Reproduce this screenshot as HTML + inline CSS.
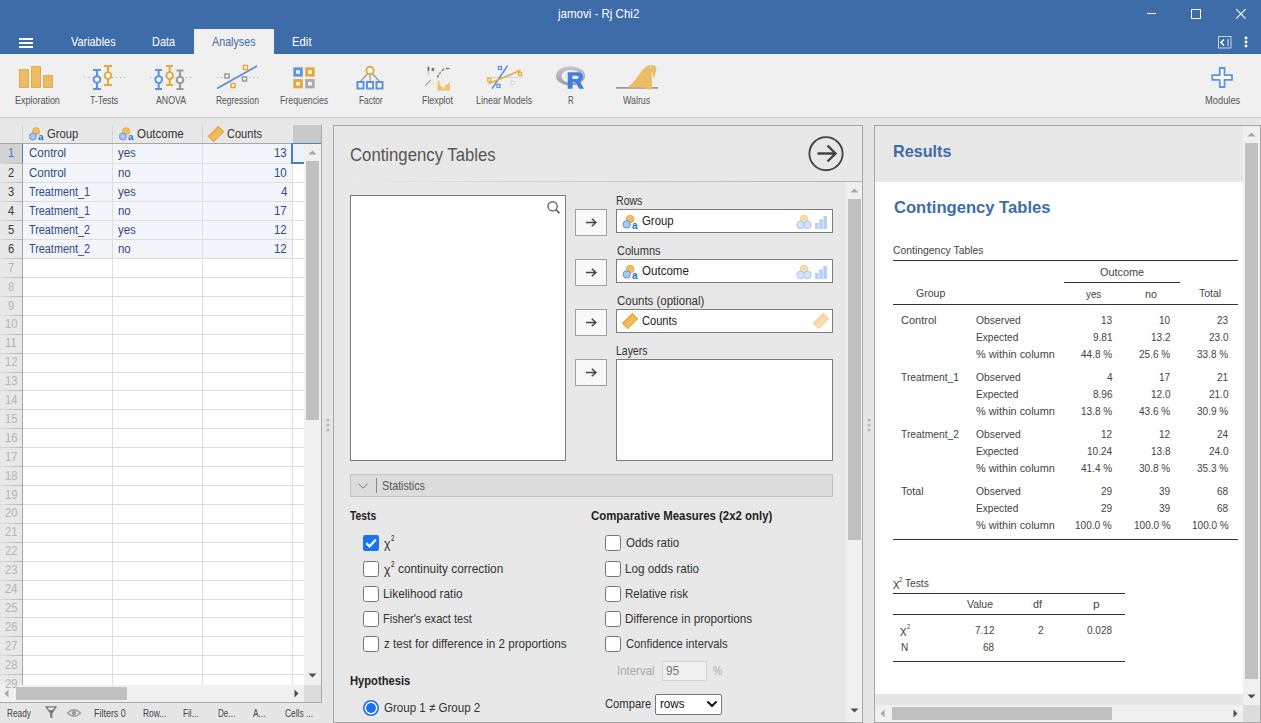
<!DOCTYPE html>
<html><head><meta charset="utf-8">
<style>
*{box-sizing:border-box;margin:0;padding:0}
html,body{width:1261px;height:723px;overflow:hidden;background:#e6e6e6;font-family:"Liberation Sans",sans-serif;position:relative}
.a{position:absolute}
.t{position:absolute;white-space:nowrap;transform-origin:0 0}
svg{position:absolute;overflow:visible}
</style></head><body>
<div class="a" style="left:0px;top:0px;width:1261px;height:54px;background:#3e6ca8"></div>
<div class="a" style="left:1147px;top:13px;width:9px;height:1px;background:#fff"></div>
<div class="a" style="left:1191px;top:9px;width:9.5px;height:9.5px;border:1px solid #fff"></div>
<svg style="left:1235px;top:8px" width="12" height="12" viewBox="0 0 12 12"><path d="M1.2 1.2L10.6 10.6M10.6 1.2L1.2 10.6" stroke="#fff" stroke-width="1.1" fill="none"/></svg>
<div class="a" style="left:19px;top:38px;width:14px;height:2px;background:#fff"></div>
<div class="a" style="left:19px;top:42px;width:14px;height:2px;background:#fff"></div>
<div class="a" style="left:19px;top:46px;width:14px;height:2px;background:#fff"></div>
<div class="a" style="left:194px;top:29px;width:80px;height:25px;background:#f0f0f0"></div>
<svg style="left:1218px;top:36px" width="14" height="13" viewBox="0 0 14 13"><rect x="0.5" y="0.5" width="12.5" height="11.5" fill="none" stroke="#c8d4e6" stroke-width="1"/><path d="M6 3.5L3 6.5L6 9.5" stroke="#fff" stroke-width="1.5" fill="none"/><rect x="9" y="3" width="2" height="7" fill="#8fa8cc"/></svg>
<svg style="left:1244px;top:35.6px" width="4" height="4"><circle cx="2" cy="2" r="1.45" fill="#fff"/></svg>
<svg style="left:1244px;top:40px" width="4" height="4"><circle cx="2" cy="2" r="1.45" fill="#fff"/></svg>
<svg style="left:1244px;top:44px" width="4" height="4"><circle cx="2" cy="2" r="1.45" fill="#fff"/></svg>
<div class="a" style="left:0px;top:54px;width:1261px;height:63px;background:#f0f0f0"></div>
<div class="a" style="left:0px;top:117px;width:1261px;height:1px;background:#cdcdcd"></div>
<svg style="left:18px;top:65px" width="37" height="25" viewBox="0 0 37 25"><rect x="1.5" y="4.5" width="9" height="18" fill="#ebbb66" stroke="#e3ad4f"/><rect x="13.5" y="1.5" width="9" height="21" fill="#ebbb66" stroke="#e3ad4f"/><rect x="25.5" y="10.5" width="9" height="12" fill="#ebbb66" stroke="#e3ad4f"/></svg>
<svg style="left:80.6px;top:63px" width="48" height="30" viewBox="0 0 48 30"><line x1="3" y1="14.5" x2="45" y2="14.5" stroke="#a8b8cc" stroke-width="1" stroke-dasharray="1.2,2.8"/><path d="M12 7H20M16 7V26M12 26H20" stroke="#5a93e8" stroke-width="2" fill="none"/><circle cx="16" cy="16.5" r="3.3" fill="#fff" stroke="#5a93e8" stroke-width="2"/><path d="M23 3H31M27 3V22M23 22H31" stroke="#e8a838" stroke-width="2" fill="none"/><circle cx="27" cy="12.5" r="3.3" fill="#fff" stroke="#e8a838" stroke-width="2"/></svg>
<svg style="left:148px;top:63px" width="46" height="30" viewBox="0 0 46 30"><line x1="2" y1="14.5" x2="44" y2="14.5" stroke="#a8b8cc" stroke-width="1" stroke-dasharray="1.2,2.8"/><path d="M7 7H14M10.7 7V26M7 26H14" stroke="#5a93e8" stroke-width="2" fill="none"/><circle cx="10.7" cy="16.6" r="3.3" fill="#fff" stroke="#5a93e8" stroke-width="2"/><path d="M18 3H25M21.7 3V22M18 22H25" stroke="#e8a838" stroke-width="2" fill="none"/><circle cx="21.7" cy="12.6" r="3.3" fill="#fff" stroke="#e8a838" stroke-width="2"/><path d="M28.5 7.5H35.5M32 7.5V26M28.5 26H35.5" stroke="#999" stroke-width="2" fill="none"/><circle cx="32" cy="17" r="3.3" fill="#fff" stroke="#999" stroke-width="2"/></svg>
<svg style="left:214px;top:63px" width="48" height="30" viewBox="0 0 48 30"><line x1="3" y1="14.5" x2="45" y2="14.5" stroke="#a8b8cc" stroke-width="1" stroke-dasharray="1.2,2.8"/><line x1="3" y1="25.5" x2="43" y2="3" stroke="#4a8ae6" stroke-width="1.6"/><rect x="11" y="11" width="4" height="4" fill="#fff" stroke="#999" stroke-width="1.5"/><rect x="29.5" y="2.5" width="4" height="4" fill="#fff" stroke="#e8a838" stroke-width="1.5"/><rect x="28.5" y="14" width="4" height="4" fill="#fff" stroke="#999" stroke-width="1.5"/><rect x="17" y="20.5" width="4" height="4" fill="#fff" stroke="#e8a838" stroke-width="1.5"/></svg>
<svg style="left:292px;top:66px" width="25" height="24" viewBox="0 0 25 24"><rect x="2.8" y="2.8" width="6.5" height="6.4" fill="#fff" stroke="#5a93e8" stroke-width="2.9"/><rect x="14.7" y="2.8" width="6.5" height="6.4" fill="#fff" stroke="#e8a838" stroke-width="2.9"/><rect x="2.8" y="14.5" width="6.5" height="6.4" fill="#fff" stroke="#e8a838" stroke-width="2.9"/><rect x="14.7" y="14.5" width="6.5" height="6.4" fill="#fff" stroke="#aaa" stroke-width="2.9"/></svg>
<svg style="left:354px;top:65px" width="33" height="26" viewBox="0 0 33 26"><path d="M16 6L6 17M16 6V17M16 6L26 17" stroke="#999" stroke-width="1.2" fill="none"/><circle cx="16" cy="5.4" r="3.6" fill="#fff" stroke="#e8a838" stroke-width="2"/><rect x="3.5" y="17" width="6" height="6.5" fill="#fff" stroke="#5a93e8" stroke-width="2"/><rect x="13" y="17" width="6" height="6.5" fill="#fff" stroke="#5a93e8" stroke-width="2"/><rect x="22.5" y="17" width="6" height="6.5" fill="#fff" stroke="#5a93e8" stroke-width="2"/></svg>
<svg style="left:420px;top:60px" width="36" height="34" viewBox="0 0 36 34"><path d="M8.4 5.2V15" stroke="#f5c878" stroke-width="1.4"/><rect x="7.6" y="7" width="1.6" height="4" fill="#3a6eb0"/><circle cx="12.9" cy="9.6" r="2" fill="#f5c878"/><rect x="11.9" y="8" width="2" height="3" fill="#3a6eb0" opacity="0.85"/><path d="M17.5 17.5Q19 12 23 9.6Q26 8.5 29.5 8.5" stroke="#f5d090" stroke-width="1.6" fill="none"/><path d="M17.5 17.5L18.5 15M19.5 14L20.5 12.5M22 10.5L24 9.3M26 8.5H29.5" stroke="#3a6eb0" stroke-width="1.1" fill="none"/><path d="M5.5 25.5L10.7 19.8" stroke="#999" stroke-width="1.1"/><path d="M12 21.5L14 22.5M11.5 23.5L15 24.5" stroke="#f5d8a8" stroke-width="0.9"/><path d="M17.5 30V21H19.5V25H21V27H22.5V29H23.5V30Z" fill="#f6bf55"/><path d="M23.5 30V27H25V25H26.5V24H28V23H30V30Z" fill="#f6c46a"/><path d="M17 30.5H30" stroke="#bbb" stroke-width="0.5"/></svg>
<svg style="left:485px;top:63px" width="40" height="30" viewBox="0 0 40 30"><line x1="1" y1="14.5" x2="37" y2="14.5" stroke="#d4d4d4" stroke-width="1"/><line x1="7.1" y1="25.7" x2="22.6" y2="2.6" stroke="#4a8ae6" stroke-width="1.5"/><line x1="3.6" y1="20.8" x2="35.6" y2="7.3" stroke="#e8a838" stroke-width="1.5"/><rect x="13.4" y="3.5" width="3" height="3" fill="#fff" stroke="#5a93e8" stroke-width="1.3"/><rect x="33.6" y="9.4" width="3" height="3" fill="#fff" stroke="#e8a838" stroke-width="1.3"/><rect x="2.8" y="15.5" width="3" height="3" fill="#fff" stroke="#e8a838" stroke-width="1.3"/><rect x="26.1" y="18.3" width="3" height="3" fill="#fff" stroke="#d8d8d8" stroke-width="1.3"/><rect x="12" y="21.4" width="3" height="3" fill="#fff" stroke="#5a93e8" stroke-width="1.3"/></svg>
<svg style="left:554px;top:65px" width="32" height="26" viewBox="0 0 32 26"><defs><linearGradient id="rg" x1="0" y1="0" x2="0" y2="1"><stop offset="0" stop-color="#c8c8cc"/><stop offset="1" stop-color="#9a9aa0"/></linearGradient></defs><ellipse cx="16.5" cy="10.9" rx="14.5" ry="9.6" fill="url(#rg)"/><ellipse cx="17" cy="11.4" rx="9.5" ry="6.4" fill="#f0f0f0"/><path d="M13.7 7.2H24Q28.8 7.2 28.8 11.8Q28.8 15.2 25.8 16.3L30 23.8H25.2L21.5 17.2H18.5V23.8H13.7Z M18.5 10.8V13.9H23Q24.6 13.9 24.6 12.3Q24.6 10.8 23 10.8Z" fill="#3f7fe0" fill-rule="evenodd"/></svg>
<svg style="left:615px;top:64px" width="45" height="27" viewBox="0 0 45 27"><line x1="1" y1="23.8" x2="43" y2="23.8" stroke="#999" stroke-width="1.8"/><path d="M12 23.6Q18 19.5 23 12Q27 5.5 31 2.5Q33 1 37 1.2Q40.5 1.5 41.3 4Q41.8 6 40.6 8L39.4 13.6Q38.8 15 38.3 13.8L37.6 8.3Q37 7.6 36.6 8.6L37.2 23.2Q37 25.4 33.5 25.6Q31 25.6 30.3 23.8Z" fill="#ebbb66"/><circle cx="35.6" cy="3.6" r="0.7" fill="#fff"/></svg>
<svg style="left:1211px;top:67px" width="23" height="22" viewBox="0 0 23 22"><path d="M8.8 1H13.5V8.1H21V12.9H13.5V20H8.8V12.9H1.3V8.1H8.8Z" fill="#fff" stroke="#5a93e8" stroke-width="1.8"/></svg>
<div class="a" style="left:0px;top:125px;width:321px;height:18px;background:#e8e8e8"></div>
<div class="a" style="left:293px;top:125px;width:29px;height:18px;background:#cacaca"></div>
<div class="a" style="left:22px;top:125px;width:1px;height:18px;background:#d4d4d4"></div>
<div class="a" style="left:112px;top:125px;width:1px;height:18px;background:#d4d4d4"></div>
<div class="a" style="left:202px;top:125px;width:1px;height:18px;background:#d4d4d4"></div>
<div class="a" style="left:0px;top:143px;width:304px;height:1px;background:#a8a8a8"></div>
<div class="a" style="left:0px;top:144px;width:304px;height:541px;background:#ffffff"></div>
<div class="a" style="left:0px;top:144px;width:22px;height:541px;background:#e8e8e8"></div>
<div class="a" style="left:23px;top:144px;width:269px;height:114px;background:#f2f5f9"></div>
<div class="a" style="left:0px;top:144px;width:22px;height:19px;background:#d2d2d2"></div>
<div class="a" style="left:23px;top:163px;width:281px;height:1px;background:#dedede"></div>
<div class="a" style="left:0px;top:163px;width:22px;height:1px;background:linear-gradient(90deg,#dcdcdc,#b4b4b4)"></div>
<div class="a" style="left:23px;top:182px;width:281px;height:1px;background:#dedede"></div>
<div class="a" style="left:0px;top:182px;width:22px;height:1px;background:linear-gradient(90deg,#dcdcdc,#b4b4b4)"></div>
<div class="a" style="left:23px;top:201px;width:281px;height:1px;background:#dedede"></div>
<div class="a" style="left:0px;top:201px;width:22px;height:1px;background:linear-gradient(90deg,#dcdcdc,#b4b4b4)"></div>
<div class="a" style="left:23px;top:220px;width:281px;height:1px;background:#dedede"></div>
<div class="a" style="left:0px;top:220px;width:22px;height:1px;background:linear-gradient(90deg,#dcdcdc,#b4b4b4)"></div>
<div class="a" style="left:23px;top:239px;width:281px;height:1px;background:#dedede"></div>
<div class="a" style="left:0px;top:239px;width:22px;height:1px;background:linear-gradient(90deg,#dcdcdc,#b4b4b4)"></div>
<div class="a" style="left:23px;top:258px;width:281px;height:1px;background:#dedede"></div>
<div class="a" style="left:0px;top:258px;width:22px;height:1px;background:linear-gradient(90deg,#dcdcdc,#b4b4b4)"></div>
<div class="a" style="left:23px;top:277px;width:281px;height:1px;background:#dedede"></div>
<div class="a" style="left:0px;top:277px;width:22px;height:1px;background:linear-gradient(90deg,#dcdcdc,#b4b4b4)"></div>
<div class="a" style="left:23px;top:296px;width:281px;height:1px;background:#dedede"></div>
<div class="a" style="left:0px;top:296px;width:22px;height:1px;background:linear-gradient(90deg,#dcdcdc,#b4b4b4)"></div>
<div class="a" style="left:23px;top:315px;width:281px;height:1px;background:#dedede"></div>
<div class="a" style="left:0px;top:315px;width:22px;height:1px;background:linear-gradient(90deg,#dcdcdc,#b4b4b4)"></div>
<div class="a" style="left:23px;top:334px;width:281px;height:1px;background:#dedede"></div>
<div class="a" style="left:0px;top:334px;width:22px;height:1px;background:linear-gradient(90deg,#dcdcdc,#b4b4b4)"></div>
<div class="a" style="left:23px;top:353px;width:281px;height:1px;background:#dedede"></div>
<div class="a" style="left:0px;top:353px;width:22px;height:1px;background:linear-gradient(90deg,#dcdcdc,#b4b4b4)"></div>
<div class="a" style="left:23px;top:372px;width:281px;height:1px;background:#dedede"></div>
<div class="a" style="left:0px;top:372px;width:22px;height:1px;background:linear-gradient(90deg,#dcdcdc,#b4b4b4)"></div>
<div class="a" style="left:23px;top:390px;width:281px;height:1px;background:#dedede"></div>
<div class="a" style="left:0px;top:390px;width:22px;height:1px;background:linear-gradient(90deg,#dcdcdc,#b4b4b4)"></div>
<div class="a" style="left:23px;top:409px;width:281px;height:1px;background:#dedede"></div>
<div class="a" style="left:0px;top:409px;width:22px;height:1px;background:linear-gradient(90deg,#dcdcdc,#b4b4b4)"></div>
<div class="a" style="left:23px;top:428px;width:281px;height:1px;background:#dedede"></div>
<div class="a" style="left:0px;top:428px;width:22px;height:1px;background:linear-gradient(90deg,#dcdcdc,#b4b4b4)"></div>
<div class="a" style="left:23px;top:447px;width:281px;height:1px;background:#dedede"></div>
<div class="a" style="left:0px;top:447px;width:22px;height:1px;background:linear-gradient(90deg,#dcdcdc,#b4b4b4)"></div>
<div class="a" style="left:23px;top:466px;width:281px;height:1px;background:#dedede"></div>
<div class="a" style="left:0px;top:466px;width:22px;height:1px;background:linear-gradient(90deg,#dcdcdc,#b4b4b4)"></div>
<div class="a" style="left:23px;top:485px;width:281px;height:1px;background:#dedede"></div>
<div class="a" style="left:0px;top:485px;width:22px;height:1px;background:linear-gradient(90deg,#dcdcdc,#b4b4b4)"></div>
<div class="a" style="left:23px;top:504px;width:281px;height:1px;background:#dedede"></div>
<div class="a" style="left:0px;top:504px;width:22px;height:1px;background:linear-gradient(90deg,#dcdcdc,#b4b4b4)"></div>
<div class="a" style="left:23px;top:523px;width:281px;height:1px;background:#dedede"></div>
<div class="a" style="left:0px;top:523px;width:22px;height:1px;background:linear-gradient(90deg,#dcdcdc,#b4b4b4)"></div>
<div class="a" style="left:23px;top:542px;width:281px;height:1px;background:#dedede"></div>
<div class="a" style="left:0px;top:542px;width:22px;height:1px;background:linear-gradient(90deg,#dcdcdc,#b4b4b4)"></div>
<div class="a" style="left:23px;top:561px;width:281px;height:1px;background:#dedede"></div>
<div class="a" style="left:0px;top:561px;width:22px;height:1px;background:linear-gradient(90deg,#dcdcdc,#b4b4b4)"></div>
<div class="a" style="left:23px;top:580px;width:281px;height:1px;background:#dedede"></div>
<div class="a" style="left:0px;top:580px;width:22px;height:1px;background:linear-gradient(90deg,#dcdcdc,#b4b4b4)"></div>
<div class="a" style="left:23px;top:599px;width:281px;height:1px;background:#dedede"></div>
<div class="a" style="left:0px;top:599px;width:22px;height:1px;background:linear-gradient(90deg,#dcdcdc,#b4b4b4)"></div>
<div class="a" style="left:23px;top:617px;width:281px;height:1px;background:#dedede"></div>
<div class="a" style="left:0px;top:617px;width:22px;height:1px;background:linear-gradient(90deg,#dcdcdc,#b4b4b4)"></div>
<div class="a" style="left:23px;top:636px;width:281px;height:1px;background:#dedede"></div>
<div class="a" style="left:0px;top:636px;width:22px;height:1px;background:linear-gradient(90deg,#dcdcdc,#b4b4b4)"></div>
<div class="a" style="left:23px;top:655px;width:281px;height:1px;background:#dedede"></div>
<div class="a" style="left:0px;top:655px;width:22px;height:1px;background:linear-gradient(90deg,#dcdcdc,#b4b4b4)"></div>
<div class="a" style="left:23px;top:674px;width:281px;height:1px;background:#dedede"></div>
<div class="a" style="left:0px;top:674px;width:22px;height:1px;background:linear-gradient(90deg,#dcdcdc,#b4b4b4)"></div>
<div class="a" style="left:22px;top:144px;width:1px;height:541px;background:#a8a8a8"></div>
<div class="a" style="left:22px;top:144px;width:1px;height:19px;background:#4a7cc8"></div>
<div class="a" style="left:112px;top:144px;width:1px;height:541px;background:#dedede"></div>
<div class="a" style="left:202px;top:144px;width:1px;height:541px;background:#dedede"></div>
<div class="a" style="left:292px;top:144px;width:1px;height:541px;background:#dedede"></div>
<div class="a" style="left:291px;top:143px;width:14px;height:21px;background:#eef2fa;border:2px solid #4a7cc8;border-right:none;border-top-width:1px"></div>
<svg style="left:28px;top:126px" width="16" height="16" viewBox="0 0 16 16"><g opacity="1.0"><circle cx="8.1" cy="5.2" r="3.6" fill="#f2bd5c" stroke="#e3a63c" stroke-width="0.8"/><circle cx="4.9" cy="10.5" r="3.4" fill="#a9c8f4" stroke="#5a93e8" stroke-width="1"/></g><text x="10.0" y="13.9" font-family="Liberation Sans" font-size="9.8" font-weight="bold" fill="#1b6fe0">a</text></svg>
<svg style="left:118px;top:126px" width="16" height="16" viewBox="0 0 16 16"><g opacity="1.0"><circle cx="8.1" cy="5.2" r="3.6" fill="#f2bd5c" stroke="#e3a63c" stroke-width="0.8"/><circle cx="4.9" cy="10.5" r="3.4" fill="#a9c8f4" stroke="#5a93e8" stroke-width="1"/></g><text x="10.0" y="13.9" font-family="Liberation Sans" font-size="9.8" font-weight="bold" fill="#1b6fe0">a</text></svg>
<svg style="left:208px;top:126px" width="16" height="16" viewBox="0 0 16 16"><g opacity="1.0" transform="rotate(-45 8 8)"><rect x="1" y="4.3" width="14" height="7.4" fill="#f2bd5c" stroke="#e3a338" stroke-width="1"/><path d="M3.5 4.8V7M5.8 4.8V6.5M8 4.8V7M10.2 4.8V6.5M12.5 4.8V7" stroke="#d99a30" stroke-width="0.8"/></g></svg>
<div class="a" style="left:304px;top:144px;width:17px;height:541px;background:#f0f0f0"></div>
<div class="a" style="left:304px;top:143px;width:17px;height:1px;background:#4a7cc8"></div>
<div class="a" style="left:306px;top:161px;width:13px;height:259px;background:#c0c0c0"></div>
<svg style="left:308px;top:150px" width="9" height="5" viewBox="0 0 9 5"><path d="M0.5 4.5L4.5 0.5L8.5 4.5Z" fill="#a6a6a6"/></svg>
<svg style="left:308px;top:673px" width="9" height="5" viewBox="0 0 9 5"><path d="M0.5 0.5L4.5 4.5L8.5 0.5Z" fill="#505050"/></svg>
<div class="a" style="left:0px;top:685px;width:304px;height:17px;background:#f0f0f0"></div>
<div class="a" style="left:16px;top:687px;width:111px;height:13px;background:#c0c0c0"></div>
<svg style="left:4px;top:689px" width="5" height="9" viewBox="0 0 5 9"><path d="M4.5 0.5L0.5 4.5L4.5 8.5Z" fill="#a6a6a6"/></svg>
<svg style="left:294px;top:689px" width="5" height="9" viewBox="0 0 5 9"><path d="M0.5 0.5L4.5 4.5L0.5 8.5Z" fill="#505050"/></svg>
<div class="a" style="left:304px;top:685px;width:17px;height:17px;background:#dcdcdc"></div>
<div class="a" style="left:321px;top:125px;width:1px;height:578px;background:#a8a8a8"></div>
<div class="a" style="left:0px;top:702px;width:322px;height:1px;background:#a8a8a8"></div>
<svg style="left:325.5px;top:418.2px" width="4" height="4" viewBox="0 0 4 4"><circle cx="2" cy="2" r="1.6" fill="#b6b6b6"/></svg>
<svg style="left:325.5px;top:423px" width="4" height="4" viewBox="0 0 4 4"><circle cx="2" cy="2" r="1.6" fill="#b6b6b6"/></svg>
<svg style="left:325.5px;top:427.6px" width="4" height="4" viewBox="0 0 4 4"><circle cx="2" cy="2" r="1.6" fill="#b6b6b6"/></svg>
<svg style="left:44px;top:706px" width="14" height="13" viewBox="0 0 14 13"><path d="M0.8 0.3H13.2L8.4 7.6V12.6L6.1 11.2V7.6Z" fill="#7c7c7c"/><path d="M3.6 1.6H10.4L8.9 4H5.1Z" fill="#e6e6e6"/></svg>
<svg style="left:67px;top:709px" width="14" height="8" viewBox="0 0 14 8"><path d="M0.5 4Q7 -2.5 13.5 4Q7 10.5 0.5 4Z" fill="none" stroke="#999" stroke-width="1.2"/><circle cx="7" cy="4" r="2.2" fill="#999"/></svg>
<div class="a" style="left:333px;top:125px;width:530px;height:598px;background:#e8e8e8;border:1px solid #a6a6a6"></div>
<svg style="left:806px;top:133px" width="40" height="40" viewBox="0 0 40 40"><circle cx="20" cy="20.7" r="16.6" fill="none" stroke="#444" stroke-width="1.9"/><path d="M11.5 20.5H29.5M21.5 12.5L29.5 20.5L21.5 28.5" fill="none" stroke="#444" stroke-width="2.4" stroke-linecap="butt"/></svg>
<div class="a" style="left:338px;top:181px;width:524px;height:1px;background:linear-gradient(90deg,#e8e8e8,#cfcfcf 40%,#b2b2b2)"></div>
<div class="a" style="left:846px;top:182px;width:16px;height:540px;background:#f0f0f0"></div>
<div class="a" style="left:848px;top:199px;width:13px;height:341px;background:#c0c0c0"></div>
<svg style="left:850px;top:188px" width="9" height="5" viewBox="0 0 9 5"><path d="M0.5 4.5L4.5 0.5L8.5 4.5Z" fill="#a6a6a6"/></svg>
<svg style="left:850px;top:708px" width="9" height="5" viewBox="0 0 9 5"><path d="M0.5 0.5L4.5 4.5L8.5 0.5Z" fill="#505050"/></svg>
<div class="a" style="left:350px;top:195px;width:216px;height:266px;background:#fff;border:1px solid #7a7a7a"></div>
<svg style="left:545px;top:199px" width="18" height="18" viewBox="0 0 18 18"><circle cx="7.6" cy="7.3" r="4.6" fill="none" stroke="#666" stroke-width="1.4"/><path d="M11 10.7L14.5 14.3" stroke="#666" stroke-width="1.8"/></svg>
<div class="a" style="left:575px;top:209px;width:32px;height:27px;background:#f8f8f8;border:1px solid #a0a0a0"></div>
<svg style="left:585px;top:216px" width="14" height="14" viewBox="0 0 14 14"><path d="M1 6.5H11M6.8 2.8L10.9 6.5L6.8 10.2" fill="none" stroke="#444" stroke-width="1.5"/></svg>
<div class="a" style="left:616px;top:209px;width:217px;height:24px;background:#fff;border:1px solid #7c7c7c"></div>
<div class="a" style="left:575px;top:259px;width:32px;height:27px;background:#f8f8f8;border:1px solid #a0a0a0"></div>
<svg style="left:585px;top:266px" width="14" height="14" viewBox="0 0 14 14"><path d="M1 6.5H11M6.8 2.8L10.9 6.5L6.8 10.2" fill="none" stroke="#444" stroke-width="1.5"/></svg>
<div class="a" style="left:616px;top:259px;width:217px;height:24px;background:#fff;border:1px solid #7c7c7c"></div>
<div class="a" style="left:575px;top:309px;width:32px;height:27px;background:#f8f8f8;border:1px solid #a0a0a0"></div>
<svg style="left:585px;top:316px" width="14" height="14" viewBox="0 0 14 14"><path d="M1 6.5H11M6.8 2.8L10.9 6.5L6.8 10.2" fill="none" stroke="#444" stroke-width="1.5"/></svg>
<div class="a" style="left:616px;top:309px;width:217px;height:24px;background:#fff;border:1px solid #7c7c7c"></div>
<div class="a" style="left:575px;top:359px;width:32px;height:27px;background:#f8f8f8;border:1px solid #a0a0a0"></div>
<svg style="left:585px;top:366px" width="14" height="14" viewBox="0 0 14 14"><path d="M1 6.5H11M6.8 2.8L10.9 6.5L6.8 10.2" fill="none" stroke="#444" stroke-width="1.5"/></svg>
<div class="a" style="left:616px;top:359px;width:217px;height:102px;background:#fff;border:1px solid #7c7c7c"></div>
<svg style="left:622px;top:213px" width="18" height="18" viewBox="0 0 18 18"><circle cx="8.1" cy="6" r="3.8" fill="#f2bd5c" stroke="#e3a63c" stroke-width="0.9"/><circle cx="4.7" cy="11.4" r="3.7" fill="#a9c8f4" stroke="#5a93e8" stroke-width="1"/><text x="10.0" y="15.5" font-family="Liberation Sans" font-size="10" font-weight="bold" fill="#1b6fe0">a</text></svg>
<svg style="left:622px;top:263px" width="18" height="18" viewBox="0 0 18 18"><circle cx="8.1" cy="6" r="3.8" fill="#f2bd5c" stroke="#e3a63c" stroke-width="0.9"/><circle cx="4.7" cy="11.4" r="3.7" fill="#a9c8f4" stroke="#5a93e8" stroke-width="1"/><text x="10.0" y="15.5" font-family="Liberation Sans" font-size="10" font-weight="bold" fill="#1b6fe0">a</text></svg>
<svg style="left:795.8px;top:214px" width="18" height="18" viewBox="0 0 18 18"><g opacity="0.5"><circle cx="8.1" cy="5" r="3.9" fill="#f2bd5c" stroke="#e3a63c" stroke-width="0.9"/><circle cx="4.6" cy="10.9" r="3.8" fill="#a9c8f4" stroke="#5a93e8" stroke-width="1"/><circle cx="11.4" cy="10.9" r="3.8" fill="#a9c8f4" stroke="#5a93e8" stroke-width="1"/></g></svg>
<svg style="left:814px;top:215px" width="15" height="15" viewBox="0 0 15 15"><rect x="1" y="8" width="3.6" height="6" fill="#b7cff3"/><rect x="5.2" y="4.4" width="3.6" height="9.6" fill="#b7cff3"/><rect x="9.4" y="1" width="3.6" height="13" fill="#b7cff3"/></svg>
<svg style="left:795.8px;top:264px" width="18" height="18" viewBox="0 0 18 18"><g opacity="0.5"><circle cx="8.1" cy="5" r="3.9" fill="#f2bd5c" stroke="#e3a63c" stroke-width="0.9"/><circle cx="4.6" cy="10.9" r="3.8" fill="#a9c8f4" stroke="#5a93e8" stroke-width="1"/><circle cx="11.4" cy="10.9" r="3.8" fill="#a9c8f4" stroke="#5a93e8" stroke-width="1"/></g></svg>
<svg style="left:814px;top:265px" width="15" height="15" viewBox="0 0 15 15"><rect x="1" y="8" width="3.6" height="6" fill="#b7cff3"/><rect x="5.2" y="4.4" width="3.6" height="9.6" fill="#b7cff3"/><rect x="9.4" y="1" width="3.6" height="13" fill="#b7cff3"/></svg>
<svg style="left:622px;top:313px" width="16" height="16" viewBox="0 0 16 16"><g opacity="1.0" transform="rotate(-45 8 8)"><rect x="1" y="4.3" width="14" height="7.4" fill="#f2bd5c" stroke="#e3a338" stroke-width="1"/><path d="M3.5 4.8V7M5.8 4.8V6.5M8 4.8V7M10.2 4.8V6.5M12.5 4.8V7" stroke="#d99a30" stroke-width="0.8"/></g></svg>
<svg style="left:813px;top:313px" width="16" height="16" viewBox="0 0 16 16"><g opacity="0.5" transform="rotate(-45 8 8)"><rect x="1" y="4.3" width="14" height="7.4" fill="#f2bd5c" stroke="#e3a338" stroke-width="1"/><path d="M3.5 4.8V7M5.8 4.8V6.5M8 4.8V7M10.2 4.8V6.5M12.5 4.8V7" stroke="#d99a30" stroke-width="0.8"/></g></svg>
<div class="a" style="left:350px;top:474px;width:483px;height:23px;background:#dcdcdc;border:1px solid #c2c2c2"></div>
<svg style="left:357px;top:482px" width="12" height="8" viewBox="0 0 12 8"><path d="M1.5 1.8L6 6.2L10.5 1.8" fill="none" stroke="#777" stroke-width="1"/></svg>
<div class="a" style="left:376px;top:478px;width:1px;height:15px;background:#888"></div>
<svg style="left:363px;top:535px" width="16" height="16" viewBox="0 0 16 16"><rect x="0" y="0" width="16" height="16" rx="2.2" fill="#1a73f0"/><path d="M3.3 8.2L6.6 11.4L12.8 4.6" fill="none" stroke="#fff" stroke-width="2.3"/></svg>
<svg style="left:363px;top:561px" width="16" height="16" viewBox="0 0 16 16"><rect x="0.5" y="0.5" width="15" height="15" rx="2.2" fill="#fff" stroke="#767676" stroke-width="1"/></svg>
<svg style="left:363px;top:586px" width="16" height="16" viewBox="0 0 16 16"><rect x="0.5" y="0.5" width="15" height="15" rx="2.2" fill="#fff" stroke="#767676" stroke-width="1"/></svg>
<svg style="left:363px;top:611px" width="16" height="16" viewBox="0 0 16 16"><rect x="0.5" y="0.5" width="15" height="15" rx="2.2" fill="#fff" stroke="#767676" stroke-width="1"/></svg>
<svg style="left:363px;top:636px" width="16" height="16" viewBox="0 0 16 16"><rect x="0.5" y="0.5" width="15" height="15" rx="2.2" fill="#fff" stroke="#767676" stroke-width="1"/></svg>
<svg style="left:605px;top:535px" width="16" height="16" viewBox="0 0 16 16"><rect x="0.5" y="0.5" width="15" height="15" rx="2.2" fill="#fff" stroke="#767676" stroke-width="1"/></svg>
<svg style="left:605px;top:561px" width="16" height="16" viewBox="0 0 16 16"><rect x="0.5" y="0.5" width="15" height="15" rx="2.2" fill="#fff" stroke="#767676" stroke-width="1"/></svg>
<svg style="left:605px;top:586px" width="16" height="16" viewBox="0 0 16 16"><rect x="0.5" y="0.5" width="15" height="15" rx="2.2" fill="#fff" stroke="#767676" stroke-width="1"/></svg>
<svg style="left:605px;top:611px" width="16" height="16" viewBox="0 0 16 16"><rect x="0.5" y="0.5" width="15" height="15" rx="2.2" fill="#fff" stroke="#767676" stroke-width="1"/></svg>
<svg style="left:605px;top:636px" width="16" height="16" viewBox="0 0 16 16"><rect x="0.5" y="0.5" width="15" height="15" rx="2.2" fill="#fff" stroke="#767676" stroke-width="1"/></svg>
<div class="a" style="left:662px;top:661px;width:45px;height:20px;background:#f0f0f0;border:1px solid #d2d2d2"></div>
<div class="a" style="left:655px;top:694px;width:67px;height:21px;background:#fff;border:1px solid #767676;border-radius:2px"></div>
<svg style="left:706px;top:700px" width="12" height="8" viewBox="0 0 12 8"><path d="M1.5 1.5L6 6L10.5 1.5" fill="none" stroke="#111" stroke-width="2"/></svg>
<svg style="left:362px;top:699px" width="18" height="18" viewBox="0 0 18 18"><circle cx="9" cy="9" r="7.2" fill="#fff" stroke="#1a6cf5" stroke-width="1.6"/><circle cx="9" cy="9" r="4.9" fill="#1a6cf5"/></svg>
<div class="a" style="left:874px;top:125px;width:387px;height:598px;background:#fff;border:1px solid #a6a6a6"></div>
<div class="a" style="left:875px;top:126px;width:368px;height:56px;background:#e8e8e8"></div>
<div class="a" style="left:1243px;top:126px;width:17px;height:579px;background:#f0f0f0"></div>
<div class="a" style="left:1245px;top:143px;width:13px;height:536px;background:#c0c0c0"></div>
<svg style="left:1247px;top:132px" width="9" height="5" viewBox="0 0 9 5"><path d="M0.5 4.5L4.5 0.5L8.5 4.5Z" fill="#a6a6a6"/></svg>
<svg style="left:1247px;top:694px" width="9" height="5" viewBox="0 0 9 5"><path d="M0.5 0.5L4.5 4.5L8.5 0.5Z" fill="#505050"/></svg>
<div class="a" style="left:875px;top:694px;width:368px;height:11px;background:#e6e6e6"></div>
<div class="a" style="left:875px;top:705px;width:368px;height:17px;background:#f0f0f0"></div>
<div class="a" style="left:892px;top:707px;width:220px;height:13px;background:#c0c0c0"></div>
<svg style="left:880px;top:709px" width="5" height="9" viewBox="0 0 5 9"><path d="M4.5 0.5L0.5 4.5L4.5 8.5Z" fill="#a6a6a6"/></svg>
<svg style="left:1233px;top:709px" width="5" height="9" viewBox="0 0 5 9"><path d="M0.5 0.5L4.5 4.5L0.5 8.5Z" fill="#505050"/></svg>
<div class="a" style="left:1243px;top:705px;width:17px;height:17px;background:#dcdcdc"></div>
<svg style="left:866.5px;top:418.2px" width="4" height="4" viewBox="0 0 4 4"><circle cx="2" cy="2" r="1.6" fill="#b6b6b6"/></svg>
<svg style="left:866.5px;top:423px" width="4" height="4" viewBox="0 0 4 4"><circle cx="2" cy="2" r="1.6" fill="#b6b6b6"/></svg>
<svg style="left:866.5px;top:427.6px" width="4" height="4" viewBox="0 0 4 4"><circle cx="2" cy="2" r="1.6" fill="#b6b6b6"/></svg>
<div class="a" style="left:893px;top:260px;width:345px;height:1px;background:#333"></div>
<div class="a" style="left:1064px;top:282px;width:116px;height:1px;background:#333"></div>
<div class="a" style="left:893px;top:304px;width:345px;height:1px;background:#333"></div>
<div class="a" style="left:893px;top:539px;width:345px;height:1px;background:#333"></div>
<div class="a" style="left:893px;top:593px;width:232px;height:1px;background:#333"></div>
<div class="a" style="left:893px;top:614px;width:232px;height:1px;background:#333"></div>
<div class="a" style="left:893px;top:661px;width:232px;height:1px;background:#333"></div>
<span class="t" style="left:557.89px;top:6.55px;font-size:13px;line-height:13px;color:#fff;transform:scaleX(0.8864)">jamovi - Rj Chi2</span>
<span class="t" style="left:71.00px;top:34.75px;font-size:13px;line-height:13px;color:#fff;transform:scaleX(0.8375)">Variables</span>
<span class="t" style="left:152.16px;top:34.75px;font-size:13px;line-height:13px;color:#fff;transform:scaleX(0.8447)">Data</span>
<span class="t" style="left:212.00px;top:34.75px;font-size:13px;line-height:13px;color:#3e6ca8;transform:scaleX(0.8263)">Analyses</span>
<span class="t" style="left:292.13px;top:34.75px;font-size:13px;line-height:13px;color:#fff;transform:scaleX(0.8720)">Edit</span>
<span class="t" style="left:15.00px;top:95.47px;font-size:10.5px;line-height:10.5px;color:#555;transform:scaleX(0.8540)">Exploration</span>
<span class="t" style="left:90.00px;top:95.47px;font-size:10.5px;line-height:10.5px;color:#555;transform:scaleX(0.8336)">T-Tests</span>
<span class="t" style="left:156.00px;top:95.47px;font-size:10.5px;line-height:10.5px;color:#555;transform:scaleX(0.8339)">ANOVA</span>
<span class="t" style="left:215.50px;top:95.47px;font-size:10.5px;line-height:10.5px;color:#555;transform:scaleX(0.8072)">Regression</span>
<span class="t" style="left:280.00px;top:95.47px;font-size:10.5px;line-height:10.5px;color:#555;transform:scaleX(0.8343)">Frequencies</span>
<span class="t" style="left:359.00px;top:95.47px;font-size:10.5px;line-height:10.5px;color:#555;transform:scaleX(0.7931)">Factor</span>
<span class="t" style="left:422.00px;top:95.47px;font-size:10.5px;line-height:10.5px;color:#555;transform:scaleX(0.8413)">Flexplot</span>
<span class="t" style="left:476.00px;top:95.47px;font-size:10.5px;line-height:10.5px;color:#555;transform:scaleX(0.8523)">Linear Models</span>
<span class="t" style="left:567.50px;top:95.47px;font-size:10.5px;line-height:10.5px;color:#555;transform:scaleX(0.7500)">R</span>
<span class="t" style="left:623.00px;top:95.47px;font-size:10.5px;line-height:10.5px;color:#555;transform:scaleX(0.8430)">Walrus</span>
<span class="t" style="left:1205.00px;top:95.47px;font-size:10.5px;line-height:10.5px;color:#555;transform:scaleX(0.8875)">Modules</span>
<span class="t" style="left:47.00px;top:128.40px;font-size:12px;line-height:12px;color:#333;transform:scaleX(0.9353)">Group</span>
<span class="t" style="left:136.50px;top:128.40px;font-size:12px;line-height:12px;color:#333;transform:scaleX(0.9590)">Outcome</span>
<span class="t" style="left:227.00px;top:128.40px;font-size:12px;line-height:12px;color:#333;transform:scaleX(0.9205)">Counts</span>
<span class="t" style="left:29.00px;top:147.00px;font-size:12px;line-height:12px;color:#2f4a86;transform:scaleX(0.9601)">Control</span>
<span class="t" style="left:118.20px;top:147.00px;font-size:12px;line-height:12px;color:#2f4a86;transform:scaleX(0.9550)">yes</span>
<span class="t" style="left:274.14px;top:147.00px;font-size:12px;line-height:12px;color:#2f4a86;transform:scaleX(0.9550)">13</span>
<span class="t" style="left:29.00px;top:167.20px;font-size:12px;line-height:12px;color:#2f4a86;transform:scaleX(0.9601)">Control</span>
<span class="t" style="left:118.20px;top:167.20px;font-size:12px;line-height:12px;color:#2f4a86;transform:scaleX(0.9550)">no</span>
<span class="t" style="left:274.14px;top:167.20px;font-size:12px;line-height:12px;color:#2f4a86;transform:scaleX(0.9550)">10</span>
<span class="t" style="left:29.00px;top:186.13px;font-size:12px;line-height:12px;color:#2f4a86;transform:scaleX(0.9026)">Treatment_1</span>
<span class="t" style="left:118.20px;top:186.13px;font-size:12px;line-height:12px;color:#2f4a86;transform:scaleX(0.9550)">yes</span>
<span class="t" style="left:280.51px;top:186.13px;font-size:12px;line-height:12px;color:#2f4a86;transform:scaleX(0.9550)">4</span>
<span class="t" style="left:29.00px;top:205.06px;font-size:12px;line-height:12px;color:#2f4a86;transform:scaleX(0.9026)">Treatment_1</span>
<span class="t" style="left:118.20px;top:205.06px;font-size:12px;line-height:12px;color:#2f4a86;transform:scaleX(0.9550)">no</span>
<span class="t" style="left:274.14px;top:205.06px;font-size:12px;line-height:12px;color:#2f4a86;transform:scaleX(0.9550)">17</span>
<span class="t" style="left:29.00px;top:223.99px;font-size:12px;line-height:12px;color:#2f4a86;transform:scaleX(0.9026)">Treatment_2</span>
<span class="t" style="left:118.20px;top:223.99px;font-size:12px;line-height:12px;color:#2f4a86;transform:scaleX(0.9550)">yes</span>
<span class="t" style="left:274.14px;top:223.99px;font-size:12px;line-height:12px;color:#2f4a86;transform:scaleX(0.9550)">12</span>
<span class="t" style="left:29.00px;top:242.92px;font-size:12px;line-height:12px;color:#2f4a86;transform:scaleX(0.9026)">Treatment_2</span>
<span class="t" style="left:118.20px;top:242.92px;font-size:12px;line-height:12px;color:#2f4a86;transform:scaleX(0.9550)">no</span>
<span class="t" style="left:274.14px;top:242.92px;font-size:12px;line-height:12px;color:#2f4a86;transform:scaleX(0.9550)">12</span>
<span class="t" style="left:7.94px;top:147.00px;font-size:12px;line-height:12px;color:#4a78c0;transform:scaleX(0.9300)">1</span>
<span class="t" style="left:7.94px;top:167.20px;font-size:12px;line-height:12px;color:#3a3a3a;transform:scaleX(0.9300)">2</span>
<span class="t" style="left:7.94px;top:186.10px;font-size:12px;line-height:12px;color:#3a3a3a;transform:scaleX(0.9300)">3</span>
<span class="t" style="left:7.94px;top:205.00px;font-size:12px;line-height:12px;color:#3a3a3a;transform:scaleX(0.9300)">4</span>
<span class="t" style="left:7.94px;top:223.90px;font-size:12px;line-height:12px;color:#3a3a3a;transform:scaleX(0.9300)">5</span>
<span class="t" style="left:7.94px;top:242.80px;font-size:12px;line-height:12px;color:#3a3a3a;transform:scaleX(0.9300)">6</span>
<span class="t" style="left:7.94px;top:261.70px;font-size:12px;line-height:12px;color:#b4b4b4;transform:scaleX(0.9300)">7</span>
<span class="t" style="left:7.94px;top:280.60px;font-size:12px;line-height:12px;color:#b4b4b4;transform:scaleX(0.9300)">8</span>
<span class="t" style="left:7.94px;top:299.50px;font-size:12px;line-height:12px;color:#b4b4b4;transform:scaleX(0.9300)">9</span>
<span class="t" style="left:4.84px;top:318.40px;font-size:12px;line-height:12px;color:#b4b4b4;transform:scaleX(0.9300)">10</span>
<span class="t" style="left:5.26px;top:337.30px;font-size:12px;line-height:12px;color:#b4b4b4;transform:scaleX(0.9300)">11</span>
<span class="t" style="left:4.84px;top:356.20px;font-size:12px;line-height:12px;color:#b4b4b4;transform:scaleX(0.9300)">12</span>
<span class="t" style="left:4.84px;top:375.10px;font-size:12px;line-height:12px;color:#b4b4b4;transform:scaleX(0.9300)">13</span>
<span class="t" style="left:4.84px;top:394.00px;font-size:12px;line-height:12px;color:#b4b4b4;transform:scaleX(0.9300)">14</span>
<span class="t" style="left:4.84px;top:412.90px;font-size:12px;line-height:12px;color:#b4b4b4;transform:scaleX(0.9300)">15</span>
<span class="t" style="left:4.84px;top:431.80px;font-size:12px;line-height:12px;color:#b4b4b4;transform:scaleX(0.9300)">16</span>
<span class="t" style="left:4.84px;top:450.70px;font-size:12px;line-height:12px;color:#b4b4b4;transform:scaleX(0.9300)">17</span>
<span class="t" style="left:4.84px;top:469.60px;font-size:12px;line-height:12px;color:#b4b4b4;transform:scaleX(0.9300)">18</span>
<span class="t" style="left:4.84px;top:488.50px;font-size:12px;line-height:12px;color:#b4b4b4;transform:scaleX(0.9300)">19</span>
<span class="t" style="left:4.84px;top:507.40px;font-size:12px;line-height:12px;color:#b4b4b4;transform:scaleX(0.9300)">20</span>
<span class="t" style="left:4.84px;top:526.30px;font-size:12px;line-height:12px;color:#b4b4b4;transform:scaleX(0.9300)">21</span>
<span class="t" style="left:4.84px;top:545.20px;font-size:12px;line-height:12px;color:#b4b4b4;transform:scaleX(0.9300)">22</span>
<span class="t" style="left:4.84px;top:564.10px;font-size:12px;line-height:12px;color:#b4b4b4;transform:scaleX(0.9300)">23</span>
<span class="t" style="left:4.84px;top:583.00px;font-size:12px;line-height:12px;color:#b4b4b4;transform:scaleX(0.9300)">24</span>
<span class="t" style="left:4.84px;top:601.90px;font-size:12px;line-height:12px;color:#b4b4b4;transform:scaleX(0.9300)">25</span>
<span class="t" style="left:4.84px;top:620.80px;font-size:12px;line-height:12px;color:#b4b4b4;transform:scaleX(0.9300)">26</span>
<span class="t" style="left:4.84px;top:639.70px;font-size:12px;line-height:12px;color:#b4b4b4;transform:scaleX(0.9300)">27</span>
<span class="t" style="left:4.84px;top:658.60px;font-size:12px;line-height:12px;color:#b4b4b4;transform:scaleX(0.9300)">28</span>
<span class="t" style="left:4.84px;top:677.50px;font-size:12px;line-height:12px;color:#b4b4b4;transform:scaleX(0.9300)">29</span>
<span class="t" style="left:7.40px;top:708.25px;font-size:11px;line-height:11px;color:#444;transform:scaleX(0.7524)">Ready</span>
<span class="t" style="left:94.30px;top:708.25px;font-size:11px;line-height:11px;color:#444;transform:scaleX(0.8128)">Filters 0</span>
<span class="t" style="left:142.60px;top:708.25px;font-size:11px;line-height:11px;color:#444;transform:scaleX(0.7604)">Row...</span>
<span class="t" style="left:182.90px;top:708.25px;font-size:11px;line-height:11px;color:#444;transform:scaleX(0.7433)">Fil...</span>
<span class="t" style="left:217.90px;top:708.25px;font-size:11px;line-height:11px;color:#444;transform:scaleX(0.7379)">De...</span>
<span class="t" style="left:252.60px;top:708.25px;font-size:11px;line-height:11px;color:#444;transform:scaleX(0.7538)">A...</span>
<span class="t" style="left:285.00px;top:708.25px;font-size:11px;line-height:11px;color:#444;transform:scaleX(0.7647)">Cells ...</span>
<span class="t" style="left:350.00px;top:146.30px;font-size:18px;line-height:18px;color:#555;transform:scaleX(0.9294)">Contingency Tables</span>
<span class="t" style="left:616.19px;top:194.25px;font-size:13px;line-height:13px;color:#333;transform:scaleX(0.8123)">Rows</span>
<span class="t" style="left:617.00px;top:244.25px;font-size:13px;line-height:13px;color:#333;transform:scaleX(0.8495)">Columns</span>
<span class="t" style="left:617.00px;top:294.25px;font-size:13px;line-height:13px;color:#333;transform:scaleX(0.8817)">Counts (optional)</span>
<span class="t" style="left:616.20px;top:344.25px;font-size:13px;line-height:13px;color:#333;transform:scaleX(0.8048)">Layers</span>
<span class="t" style="left:642.00px;top:214.15px;font-size:13px;line-height:13px;color:#222;transform:scaleX(0.8746)">Group</span>
<span class="t" style="left:642.00px;top:264.15px;font-size:13px;line-height:13px;color:#222;transform:scaleX(0.8893)">Outcome</span>
<span class="t" style="left:642.00px;top:314.15px;font-size:13px;line-height:13px;color:#222;transform:scaleX(0.8515)">Counts</span>
<span class="t" style="left:381.50px;top:479.35px;font-size:13px;line-height:13px;color:#555;transform:scaleX(0.8265)">Statistics</span>
<span class="t" style="left:350.30px;top:509.05px;font-size:13px;line-height:13px;color:#222;font-weight:bold;transform:scaleX(0.7935)">Tests</span>
<span class="t" style="left:591.30px;top:509.05px;font-size:13px;line-height:13px;color:#222;font-weight:bold;transform:scaleX(0.8773)">Comparative Measures (2x2 only)</span>
<span class="t" style="left:384.00px;top:536.85px;font-size:13px;line-height:13px;color:#333;transform:scaleX(0.9286)">χ</span>
<span class="t" style="left:390.80px;top:534.17px;font-size:8.5px;line-height:8.5px;color:#222;transform:scaleX(0.7200)">2</span>
<span class="t" style="left:384.00px;top:562.85px;font-size:13px;line-height:13px;color:#333;transform:scaleX(0.9286)">χ</span>
<span class="t" style="left:390.80px;top:560.17px;font-size:8.5px;line-height:8.5px;color:#222;transform:scaleX(0.7200)">2</span>
<span class="t" style="left:397.50px;top:561.85px;font-size:13px;line-height:13px;color:#333;transform:scaleX(0.9100)">continuity correction</span>
<span class="t" style="left:383.09px;top:586.85px;font-size:13px;line-height:13px;color:#333;transform:scaleX(0.9105)">Likelihood ratio</span>
<span class="t" style="left:383.15px;top:611.85px;font-size:13px;line-height:13px;color:#333;transform:scaleX(0.8512)">Fisher's exact test</span>
<span class="t" style="left:384.00px;top:636.85px;font-size:13px;line-height:13px;color:#333;transform:scaleX(0.8969)">z test for difference in 2 proportions</span>
<span class="t" style="left:626.00px;top:535.85px;font-size:13px;line-height:13px;color:#333;transform:scaleX(0.8871)">Odds ratio</span>
<span class="t" style="left:625.10px;top:561.85px;font-size:13px;line-height:13px;color:#333;transform:scaleX(0.8994)">Log odds ratio</span>
<span class="t" style="left:625.11px;top:586.85px;font-size:13px;line-height:13px;color:#333;transform:scaleX(0.8891)">Relative risk</span>
<span class="t" style="left:625.10px;top:611.85px;font-size:13px;line-height:13px;color:#333;transform:scaleX(0.8993)">Difference in proportions</span>
<span class="t" style="left:626.00px;top:636.85px;font-size:13px;line-height:13px;color:#333;transform:scaleX(0.8623)">Confidence intervals</span>
<span class="t" style="left:617.32px;top:663.75px;font-size:13px;line-height:13px;color:#a8a8a8;transform:scaleX(0.8816)">Interval</span>
<span class="t" style="left:666.00px;top:663.75px;font-size:13px;line-height:13px;color:#777;transform:scaleX(0.9136)">95</span>
<span class="t" style="left:712.90px;top:663.75px;font-size:13px;line-height:13px;color:#a8a8a8;transform:scaleX(0.7917)">%</span>
<span class="t" style="left:604.60px;top:697.35px;font-size:13px;line-height:13px;color:#333;transform:scaleX(0.8641)">Compare</span>
<span class="t" style="left:659.50px;top:697.35px;font-size:13px;line-height:13px;color:#111;transform:scaleX(0.8945)">rows</span>
<span class="t" style="left:350.00px;top:674.05px;font-size:13px;line-height:13px;color:#222;font-weight:bold;transform:scaleX(0.8591)">Hypothesis</span>
<span class="t" style="left:384.00px;top:700.95px;font-size:13px;line-height:13px;color:#333;transform:scaleX(0.8883)">Group 1 ≠ Group 2</span>
<span class="t" style="left:892.75px;top:142.95px;font-size:17px;line-height:17px;color:#3e6ca8;font-weight:bold;transform:scaleX(0.9507)">Results</span>
<span class="t" style="left:893.70px;top:198.75px;font-size:17px;line-height:17px;color:#3e6ca8;font-weight:bold;transform:scaleX(0.9762)">Contingency Tables</span>
<span class="t" style="left:893.40px;top:245.31px;font-size:11.4px;line-height:11.4px;color:#444;transform:scaleX(0.9126)">Contingency Tables</span>
<span class="t" style="left:1100.20px;top:266.71px;font-size:11.4px;line-height:11.4px;color:#444;transform:scaleX(0.9547)">Outcome</span>
<span class="t" style="left:916.00px;top:287.71px;font-size:11.4px;line-height:11.4px;color:#444;transform:scaleX(0.9258)">Group</span>
<span class="t" style="left:1085.50px;top:288.71px;font-size:11.4px;line-height:11.4px;color:#444;transform:scaleX(0.8597)">yes</span>
<span class="t" style="left:1145.00px;top:288.71px;font-size:11.4px;line-height:11.4px;color:#444;transform:scaleX(0.9485)">no</span>
<span class="t" style="left:1198.50px;top:287.91px;font-size:11.4px;line-height:11.4px;color:#444;transform:scaleX(0.9223)">Total</span>
<span class="t" style="left:900.70px;top:314.61px;font-size:11.4px;line-height:11.4px;color:#444;transform:scaleX(0.9672)">Control</span>
<span class="t" style="left:976.00px;top:314.61px;font-size:11.4px;line-height:11.4px;color:#444;transform:scaleX(0.9073)">Observed</span>
<span class="t" style="left:1101.15px;top:314.61px;font-size:11.4px;line-height:11.4px;color:#444;transform:scaleX(0.8800)">13</span>
<span class="t" style="left:1159.45px;top:314.61px;font-size:11.4px;line-height:11.4px;color:#444;transform:scaleX(0.8800)">10</span>
<span class="t" style="left:1217.45px;top:314.61px;font-size:11.4px;line-height:11.4px;color:#444;transform:scaleX(0.8800)">23</span>
<span class="t" style="left:976.00px;top:331.61px;font-size:11.4px;line-height:11.4px;color:#444;transform:scaleX(0.8906)">Expected</span>
<span class="t" style="left:1092.79px;top:331.61px;font-size:11.4px;line-height:11.4px;color:#444;transform:scaleX(0.8800)">9.81</span>
<span class="t" style="left:1151.09px;top:331.61px;font-size:11.4px;line-height:11.4px;color:#444;transform:scaleX(0.8800)">13.2</span>
<span class="t" style="left:1209.09px;top:331.61px;font-size:11.4px;line-height:11.4px;color:#444;transform:scaleX(0.8800)">23.0</span>
<span class="t" style="left:976.00px;top:348.61px;font-size:11.4px;line-height:11.4px;color:#444;transform:scaleX(0.9577)">% within column</span>
<span class="t" style="left:1080.91px;top:348.61px;font-size:11.4px;line-height:11.4px;color:#444;transform:scaleX(0.8800)">44.8 %</span>
<span class="t" style="left:1139.21px;top:348.61px;font-size:11.4px;line-height:11.4px;color:#444;transform:scaleX(0.8800)">25.6 %</span>
<span class="t" style="left:1197.21px;top:348.61px;font-size:11.4px;line-height:11.4px;color:#444;transform:scaleX(0.8800)">33.8 %</span>
<span class="t" style="left:900.70px;top:371.61px;font-size:11.4px;line-height:11.4px;color:#444;transform:scaleX(0.9041)">Treatment_1</span>
<span class="t" style="left:976.00px;top:371.61px;font-size:11.4px;line-height:11.4px;color:#444;transform:scaleX(0.9073)">Observed</span>
<span class="t" style="left:1106.72px;top:371.61px;font-size:11.4px;line-height:11.4px;color:#444;transform:scaleX(0.8800)">4</span>
<span class="t" style="left:1159.45px;top:371.61px;font-size:11.4px;line-height:11.4px;color:#444;transform:scaleX(0.8800)">17</span>
<span class="t" style="left:1217.45px;top:371.61px;font-size:11.4px;line-height:11.4px;color:#444;transform:scaleX(0.8800)">21</span>
<span class="t" style="left:976.00px;top:388.61px;font-size:11.4px;line-height:11.4px;color:#444;transform:scaleX(0.8906)">Expected</span>
<span class="t" style="left:1092.79px;top:388.61px;font-size:11.4px;line-height:11.4px;color:#444;transform:scaleX(0.8800)">8.96</span>
<span class="t" style="left:1151.09px;top:388.61px;font-size:11.4px;line-height:11.4px;color:#444;transform:scaleX(0.8800)">12.0</span>
<span class="t" style="left:1209.09px;top:388.61px;font-size:11.4px;line-height:11.4px;color:#444;transform:scaleX(0.8800)">21.0</span>
<span class="t" style="left:976.00px;top:405.61px;font-size:11.4px;line-height:11.4px;color:#444;transform:scaleX(0.9577)">% within column</span>
<span class="t" style="left:1080.91px;top:405.61px;font-size:11.4px;line-height:11.4px;color:#444;transform:scaleX(0.8800)">13.8 %</span>
<span class="t" style="left:1139.21px;top:405.61px;font-size:11.4px;line-height:11.4px;color:#444;transform:scaleX(0.8800)">43.6 %</span>
<span class="t" style="left:1197.21px;top:405.61px;font-size:11.4px;line-height:11.4px;color:#444;transform:scaleX(0.8800)">30.9 %</span>
<span class="t" style="left:900.70px;top:428.61px;font-size:11.4px;line-height:11.4px;color:#444;transform:scaleX(0.9041)">Treatment_2</span>
<span class="t" style="left:976.00px;top:428.61px;font-size:11.4px;line-height:11.4px;color:#444;transform:scaleX(0.9073)">Observed</span>
<span class="t" style="left:1101.15px;top:428.61px;font-size:11.4px;line-height:11.4px;color:#444;transform:scaleX(0.8800)">12</span>
<span class="t" style="left:1159.45px;top:428.61px;font-size:11.4px;line-height:11.4px;color:#444;transform:scaleX(0.8800)">12</span>
<span class="t" style="left:1217.45px;top:428.61px;font-size:11.4px;line-height:11.4px;color:#444;transform:scaleX(0.8800)">24</span>
<span class="t" style="left:976.00px;top:445.61px;font-size:11.4px;line-height:11.4px;color:#444;transform:scaleX(0.8906)">Expected</span>
<span class="t" style="left:1087.21px;top:445.61px;font-size:11.4px;line-height:11.4px;color:#444;transform:scaleX(0.8800)">10.24</span>
<span class="t" style="left:1151.09px;top:445.61px;font-size:11.4px;line-height:11.4px;color:#444;transform:scaleX(0.8800)">13.8</span>
<span class="t" style="left:1209.09px;top:445.61px;font-size:11.4px;line-height:11.4px;color:#444;transform:scaleX(0.8800)">24.0</span>
<span class="t" style="left:976.00px;top:462.61px;font-size:11.4px;line-height:11.4px;color:#444;transform:scaleX(0.9577)">% within column</span>
<span class="t" style="left:1080.91px;top:462.61px;font-size:11.4px;line-height:11.4px;color:#444;transform:scaleX(0.8800)">41.4 %</span>
<span class="t" style="left:1139.21px;top:462.61px;font-size:11.4px;line-height:11.4px;color:#444;transform:scaleX(0.8800)">30.8 %</span>
<span class="t" style="left:1197.21px;top:462.61px;font-size:11.4px;line-height:11.4px;color:#444;transform:scaleX(0.8800)">35.3 %</span>
<span class="t" style="left:900.70px;top:485.61px;font-size:11.4px;line-height:11.4px;color:#444;transform:scaleX(0.9350)">Total</span>
<span class="t" style="left:976.00px;top:485.61px;font-size:11.4px;line-height:11.4px;color:#444;transform:scaleX(0.9073)">Observed</span>
<span class="t" style="left:1101.15px;top:485.61px;font-size:11.4px;line-height:11.4px;color:#444;transform:scaleX(0.8800)">29</span>
<span class="t" style="left:1159.45px;top:485.61px;font-size:11.4px;line-height:11.4px;color:#444;transform:scaleX(0.8800)">39</span>
<span class="t" style="left:1217.45px;top:485.61px;font-size:11.4px;line-height:11.4px;color:#444;transform:scaleX(0.8800)">68</span>
<span class="t" style="left:976.00px;top:502.61px;font-size:11.4px;line-height:11.4px;color:#444;transform:scaleX(0.8906)">Expected</span>
<span class="t" style="left:1101.15px;top:502.61px;font-size:11.4px;line-height:11.4px;color:#444;transform:scaleX(0.8800)">29</span>
<span class="t" style="left:1159.45px;top:502.61px;font-size:11.4px;line-height:11.4px;color:#444;transform:scaleX(0.8800)">39</span>
<span class="t" style="left:1217.45px;top:502.61px;font-size:11.4px;line-height:11.4px;color:#444;transform:scaleX(0.8800)">68</span>
<span class="t" style="left:976.00px;top:519.61px;font-size:11.4px;line-height:11.4px;color:#444;transform:scaleX(0.9577)">% within column</span>
<span class="t" style="left:1075.33px;top:519.61px;font-size:11.4px;line-height:11.4px;color:#444;transform:scaleX(0.8800)">100.0 %</span>
<span class="t" style="left:1133.63px;top:519.61px;font-size:11.4px;line-height:11.4px;color:#444;transform:scaleX(0.8800)">100.0 %</span>
<span class="t" style="left:1191.63px;top:519.61px;font-size:11.4px;line-height:11.4px;color:#444;transform:scaleX(0.8800)">100.0 %</span>
<span class="t" style="left:893.00px;top:577.91px;font-size:11.4px;line-height:11.4px;color:#444;transform:scaleX(1.0833)">χ</span>
<span class="t" style="left:899.30px;top:575.83px;font-size:7.5px;line-height:7.5px;color:#333;transform:scaleX(0.8000)">2</span>
<span class="t" style="left:904.50px;top:577.91px;font-size:11.4px;line-height:11.4px;color:#444;transform:scaleX(0.8926)">Tests</span>
<span class="t" style="left:967.30px;top:598.91px;font-size:11.4px;line-height:11.4px;color:#444;transform:scaleX(0.9194)">Value</span>
<span class="t" style="left:1033.30px;top:598.91px;font-size:11.4px;line-height:11.4px;color:#444;transform:scaleX(0.9386)">df</span>
<span class="t" style="left:1092.80px;top:598.91px;font-size:11.4px;line-height:11.4px;color:#444;transform:scaleX(1.0500)">p</span>
<span class="t" style="left:900.00px;top:624.91px;font-size:11.4px;line-height:11.4px;color:#444;transform:scaleX(1.0833)">χ</span>
<span class="t" style="left:907.00px;top:622.83px;font-size:7.5px;line-height:7.5px;color:#333;transform:scaleX(0.7500)">2</span>
<span class="t" style="left:974.79px;top:624.91px;font-size:11.4px;line-height:11.4px;color:#444;transform:scaleX(0.8800)">7.12</span>
<span class="t" style="left:1038.32px;top:624.91px;font-size:11.4px;line-height:11.4px;color:#444;transform:scaleX(0.8800)">2</span>
<span class="t" style="left:1087.21px;top:624.91px;font-size:11.4px;line-height:11.4px;color:#444;transform:scaleX(0.8800)">0.028</span>
<span class="t" style="left:900.50px;top:641.91px;font-size:11.4px;line-height:11.4px;color:#444;transform:scaleX(0.8800)">N</span>
<span class="t" style="left:983.15px;top:641.91px;font-size:11.4px;line-height:11.4px;color:#444;transform:scaleX(0.8800)">68</span>
</body></html>
